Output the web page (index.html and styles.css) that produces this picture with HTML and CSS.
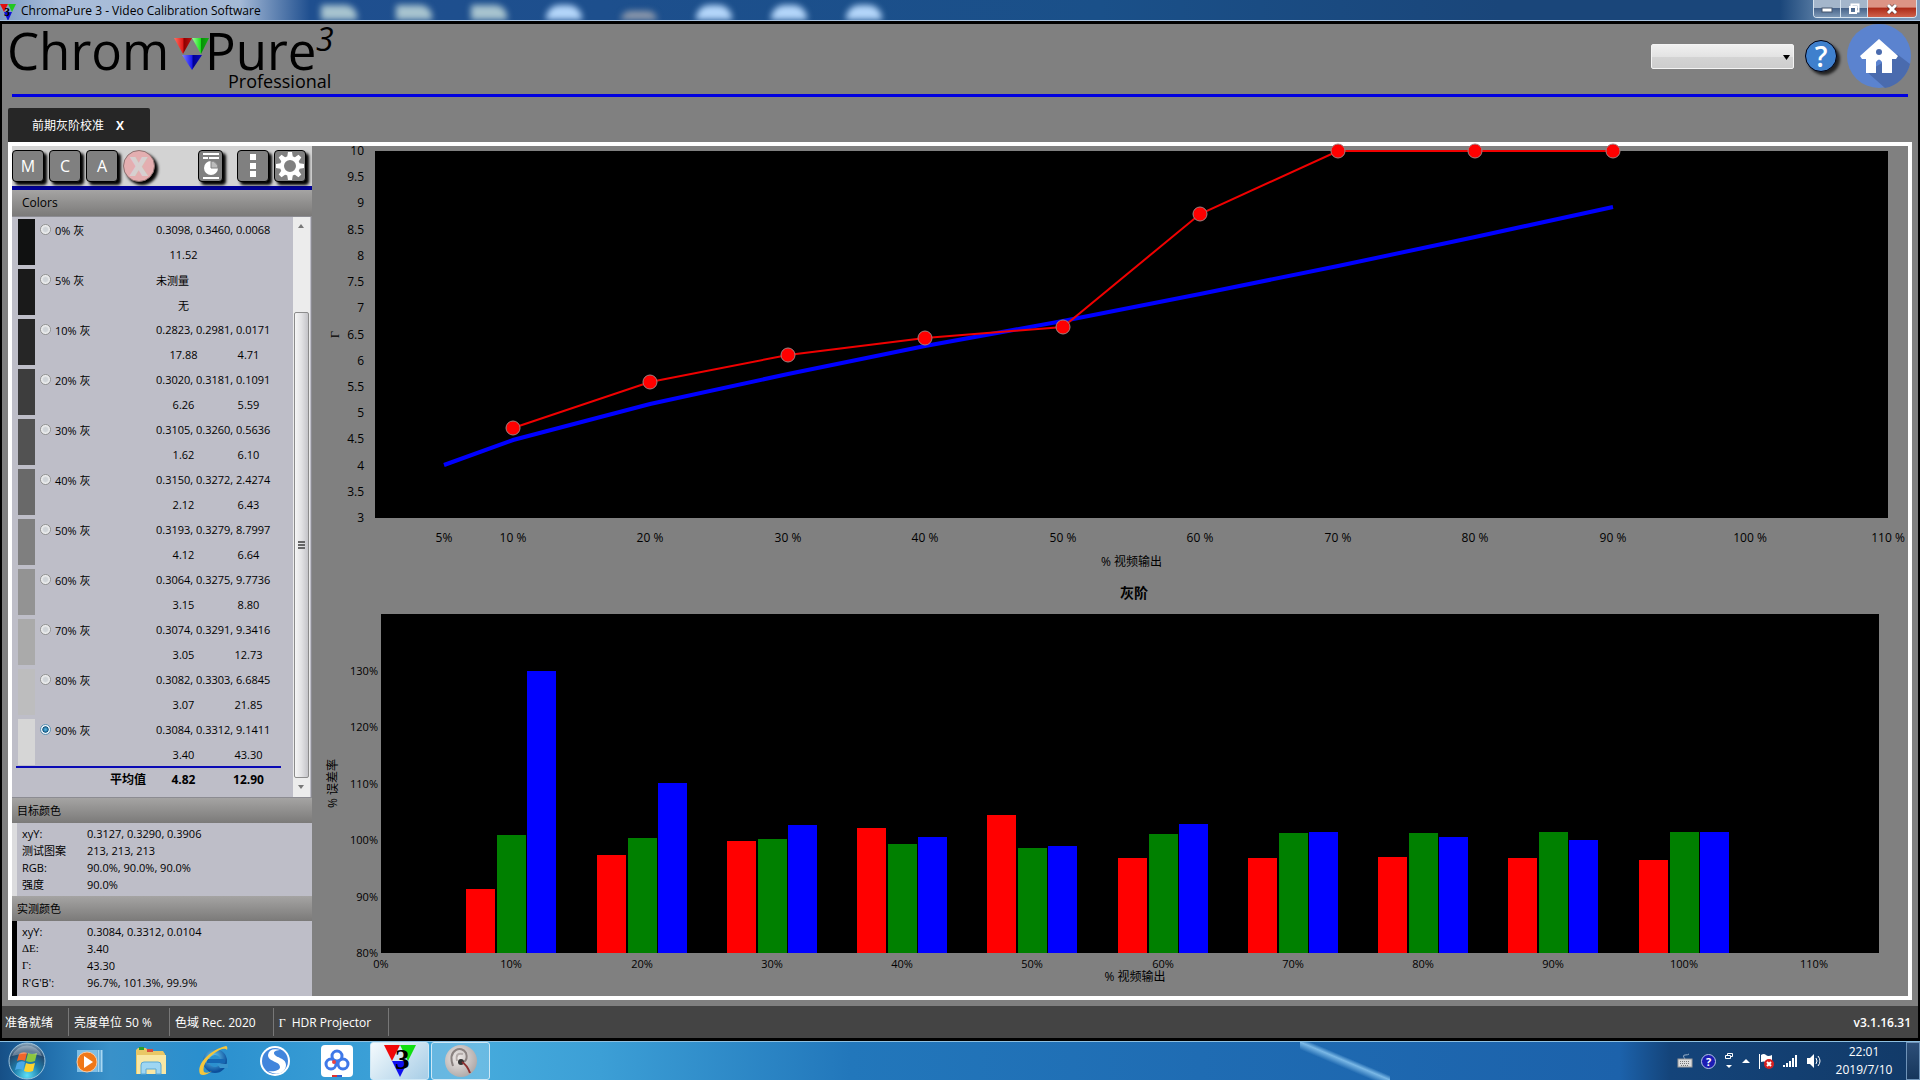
FILE: index.html
```html
<!DOCTYPE html>
<html lang="zh-CN">
<head>
    <meta charset="UTF-8">
    <meta name="viewport" content="width=device-width, initial-scale=1.0">
    <title>ChromaPure 3 - Video Calibration Software</title>
    <link rel="stylesheet" href="styles.css">
</head>
<body>
    <!-- Gradients and shapes used by several icons -->
    <svg class="defs" width="0" height="0" aria-hidden="true">
        <defs>
            <linearGradient id="g-red"><stop offset="0" stop-color="#ff7060"/><stop offset=".5" stop-color="#e01818"/><stop offset=".55" stop-color="#8c0000"/><stop offset="1" stop-color="#c01010"/></linearGradient>
            <linearGradient id="g-green"><stop offset="0" stop-color="#9dff9d"/><stop offset=".5" stop-color="#20e020"/><stop offset=".55" stop-color="#089008"/><stop offset="1" stop-color="#10b010"/></linearGradient>
            <linearGradient id="g-blue"><stop offset="0" stop-color="#8080ff"/><stop offset=".5" stop-color="#1818f0"/><stop offset=".55" stop-color="#000090"/><stop offset="1" stop-color="#0808c0"/></linearGradient>
            <radialGradient id="g-orb" cx=".5" cy=".9" r=".9"><stop offset="0" stop-color="#5fe0f5"/><stop offset=".4" stop-color="#1d7fae"/><stop offset=".75" stop-color="#23486c"/><stop offset="1" stop-color="#8fa9bd"/></radialGradient>
            <radialGradient id="g-ie" cx=".4" cy=".3" r=".8"><stop offset="0" stop-color="#6fd3f8"/><stop offset="1" stop-color="#0b4f9c"/></radialGradient>
            <radialGradient id="g-ear" cx=".4" cy=".4" r=".7"><stop offset="0" stop-color="#efeae8"/><stop offset="1" stop-color="#a9a3a2"/></radialGradient>
        </defs>
    </svg>

    <header class="titlebar">
        <svg class="title-icon" width="16" height="18" viewBox="0 0 16 18">
            <path d="M0 1h8l-4 8z" fill="#e01010"/><path d="M8 1h8l-4 8z" fill="#20c820"/><path d="M4 9h8l-4 9z" fill="#1010d8"/>
            <text x="4" y="13" class="mini-three">3</text>
        </svg>
        <span class="title-text">ChromaPure 3 - Video Calibration Software</span>
        <div class="desktop-blur"><i></i><i></i><i></i><i></i><i></i><i></i><i></i><i></i></div>
        <div class="window-buttons">
            <button class="win-min" aria-label="Minimize"><svg width="12" height="10"><rect x="1" y="4" width="10" height="4" fill="#fff" stroke="#46566e"/></svg></button>
            <button class="win-max" aria-label="Restore"><svg width="12" height="12"><path d="M3.500 3V1.500h7v7H9" fill="none" stroke="#fff" stroke-width="2"/><rect x="2" y="4" width="6" height="6" fill="none" stroke="#fff" stroke-width="2"/></svg></button>
            <button class="win-close" aria-label="Close"><svg width="12" height="10"><path d="M2 1l8 8M10 1l-8 8" stroke="#4a2a2a" stroke-width="4"/><path d="M2 1l8 8M10 1l-8 8" stroke="#fff" stroke-width="3"/></svg></button>
        </div>
    </header>

    <main class="app">
        <div class="brand-bar">
            <svg class="logo" width="332" height="68" viewBox="0 0 332 68">
                <text x="-5" y="46" class="logo-name">Chrom</text>
                <path d="M162 14h18l-9 16z" fill="url(#g-red)"/>
                <path d="M180 14h17l-8 16z" fill="url(#g-green)"/>
                <path d="M170 31h20l-10 15z" fill="url(#g-blue)"/>
                <text x="193" y="46" class="logo-name">Pure</text>
                <text x="304" y="27" class="logo-version">3</text>
                <text x="216" y="64" class="logo-edition">Professional</text>
            </svg>
            <div class="brand-tools">
                <div class="combo">
                    <select aria-label="Meter"><option></option></select>
                    <svg width="8" height="6"><path d="M0 0h7L3.500 5z"/></svg>
                </div>
                <button class="help" aria-label="Help">?</button>
                <button class="home" aria-label="Home">
                    <svg width="64" height="64" viewBox="0 0 64 64">
                        <circle cx="32" cy="32" r="32" fill="#5b83cf"/>
                        <path d="M50 30l13 10A32 32 0 0 1 38 64L20 48z" fill="#4a6bae"/>
                        <path d="M32 15L13 32l2 3h4v14h10V38q3-5 6 0v11h10V35h4l2-3z" fill="#fff"/>
                        <circle cx="32" cy="28" r="3" fill="#4a6bae"/>
                    </svg>
                </button>
            </div>
        </div>

        <nav class="tabs">
            <div class="tab">前期灰阶校准 <button class="tab-close" aria-label="Close tab">X</button></div>
        </nav>

        <div class="workspace">
            <aside class="sidebar">
                <div class="toolbar">
                    <button class="tool">M</button>
                    <button class="tool">C</button>
                    <button class="tool">A</button>
                    <button class="tool tool-stop">X</button>
                    <button class="tool tool-report" aria-label="Report">
                        <svg width="20" height="28" viewBox="0 0 20 28">
                            <path d="M2 2h16M2 6h5M8 6h10M2 26h16" stroke="#fff" stroke-width="2"/>
                            <circle cx="10" cy="16" r="7" fill="#fff"/><path d="M10 16V9a7 7 0 0 1 7 7z" fill="#bbb" stroke="#808080"/>
                        </svg>
                    </button>
                    <button class="tool" aria-label="Options"><svg width="6" height="24"><path d="M0 0h6v6H0zM0 9h6v6H0zM0 17h6v6H0z" fill="#fff"/></svg></button>
                    <button class="tool" aria-label="Settings">
                        <svg width="28" height="28" viewBox="-14 -14 28 28">
                            <g fill="#fff">
                                <path id="tooth" d="M-3-8l1-6h4l1 6z"/>
                                <use href="#tooth" transform="rotate(45)"/><use href="#tooth" transform="rotate(90)"/>
                                <use href="#tooth" transform="rotate(135)"/><use href="#tooth" transform="rotate(180)"/>
                                <use href="#tooth" transform="rotate(225)"/><use href="#tooth" transform="rotate(270)"/>
                                <use href="#tooth" transform="rotate(315)"/>
                            </g>
                            <circle r="8" fill="none" stroke="#fff" stroke-width="4"/>
                        </svg>
                    </button>
                </div>

                <h2 class="panel-title panel-title-colors">Colors</h2>
                <div class="color-list">
                    <table class="readings">
                        <colgroup><col class="col-swatch"><col class="col-name"><col class="col-num"><col class="col-num"></colgroup>
                        <tbody id="readings"></tbody>
                        <tfoot>
                            <tr><th colspan="2">平均值</th><td>4.82</td><td>12.90</td></tr>
                        </tfoot>
                    </table>
                    <div class="scrollbar">
                        <svg width="8" height="5"><path d="M0 4l3-4 3 4z" fill="#777"/></svg>
                        <div class="scroll-thumb"><i></i><i></i><i></i></div>
                        <svg width="8" height="5"><path d="M0 0h6L3 4z" fill="#777"/></svg>
                    </div>
                </div>

                <h2 class="panel-title">目标颜色</h2>
                <table class="details details-target">
                    <tr><th>xyY:</th><td>0.3127, 0.3290, 0.3906</td></tr>
                    <tr><th>测试图案</th><td>213, 213, 213</td></tr>
                    <tr><th>RGB:</th><td>90.0%, 90.0%, 90.0%</td></tr>
                    <tr><th>强度</th><td>90.0%</td></tr>
                </table>

                <h2 class="panel-title">实测颜色</h2>
                <table class="details details-measured">
                    <tr><th>xyY:</th><td>0.3084, 0.3312, 0.0104</td></tr>
                    <tr><th class="greek">ΔE:</th><td>3.40</td></tr>
                    <tr><th class="greek">Γ:</th><td>43.30</td></tr>
                    <tr><th>R'G'B':</th><td>96.7%, 101.3%, 99.9%</td></tr>
                </table>
            </aside>

            <section class="charts">
                <svg class="chart chart-gamma" id="gamma-chart"></svg>
                <h3 class="chart-title">灰阶</h3>
                <svg class="chart chart-rgb" id="rgb-chart"></svg>
            </section>
        </div>
    </main>

    <footer class="statusbar">
        <span>准备就绪</span>
        <span>亮度单位 50 %</span>
        <span>色域 Rec. 2020</span>
        <span><b class="greek">Γ</b> HDR Projector</span>
        <strong>v3.1.16.31</strong>
    </footer>

    <div class="taskbar">
        <button class="task task-start" aria-label="Start">
            <svg width="38" height="38" viewBox="0 0 38 38">
                <circle cx="19" cy="19" r="18" fill="url(#g-orb)" stroke="#9fc4dc"/>
                <path d="M11 12q4-3 8-1l-2 8q-4-2-8 0z" fill="#f0662a"/>
                <path d="M20 11q4 2 9 0l-2 8q-5 2-9 0z" fill="#8cc63f"/>
                <path d="M9 21q4-3 8-1l-2 8q-4-2-8 0z" fill="#4aa8e8"/>
                <path d="M18 21q4 2 9 0l-2 8q-5 2-9 0z" fill="#fdd32f"/>
                <path d="M4 14a16 16 0 0 1 30 0q-15-5-30 0z" fill="#fff" opacity=".3"/>
            </svg>
        </button>
        <button class="task" aria-label="Media Player">
            <svg width="32" height="32" viewBox="0 0 32 32">
                <path d="M4 5h20v22H4z" fill="#7fbfe6"/><path d="M25.500 5v22M28.500 5v22" stroke="#a9d8f2" stroke-width="2"/>
                <circle cx="14" cy="17" r="10" fill="#f07818" stroke="#f9c9a0"/><path d="M11 11l9 6-9 6z" fill="#fff"/>
            </svg>
        </button>
        <button class="task" aria-label="Explorer">
            <svg width="34" height="32" viewBox="0 0 34 32">
                <path d="M2 5l2-2h8l2 3h15l2 3v20H2z" fill="#e9c765"/><path d="M5 2h5v3H5z" fill="#2ba02b"/><path d="M13 4h6v3h-6z" fill="#d84a3a"/>
                <path d="M3 10h29v19H3z" fill="#f8e7a4"/>
                <path d="M7 29v-9q0-3 3-3h14q3 0 3 3v9h-5v-5H12v5z" fill="#9ed6f3" stroke="#5ba9d6"/>
            </svg>
        </button>
        <button class="task" aria-label="Internet Explorer">
            <svg width="32" height="32" viewBox="0 0 32 32">
                <circle cx="18" cy="16" r="9" fill="none" stroke="url(#g-ie)" stroke-width="6"/>
                <path d="M10 14h18v4H10z" fill="#1668b4"/>
                <path d="M20 19h11v4h-8z" fill="#3994cd"/>
                <path d="M3 29C-1 20 12 5 29 1q2 0 1 4-1-2-5-1C15 8 4 19 7 27q3 2 8-1-8 6-12 3z" fill="#f5c63c"/>
            </svg>
        </button>
        <button class="task" aria-label="Sogou">
            <svg width="32" height="32" viewBox="0 0 32 32">
                <circle cx="16" cy="16" r="15" fill="#fff"/><circle cx="16" cy="16" r="13" fill="#4285dc"/>
                <path d="M22 5Q10 2 9 10c0 7 12 6 12 12 0 3-5 5-12 4 10 6 18 1 18-6 0-8-12-7-12-12 0-2 3-3 7-3z" fill="#fff"/>
            </svg>
        </button>
        <button class="task" aria-label="Netdisk">
            <svg width="32" height="32" viewBox="0 0 32 32">
                <rect width="32" height="32" rx="4" fill="#fff"/>
                <g fill="none" stroke="#3f78e8" stroke-width="3"><circle cx="16" cy="11" r="5"/><circle cx="10" cy="19" r="5"/><circle cx="22" cy="19" r="5"/></g>
                <circle cx="13" cy="17" r="2" fill="#e84040"/>
                <path d="M11 31h5" stroke="#e03030" stroke-width="2"/><path d="M16 31h5" stroke="#3060d0" stroke-width="2"/>
            </svg>
        </button>
        <button class="task task-window task-active" aria-label="ChromaPure">
            <svg width="34" height="34" viewBox="0 0 34 34">
                <path d="M1 1h16l-8 16z" fill="#f00808"/><path d="M17 1h16l-8 16z" fill="#10e010"/><path d="M9 17h16l-8 16z" fill="#1010f0"/>
                <text x="12" y="25" class="task-three">3</text>
            </svg>
        </button>
        <button class="task task-window" aria-label="HCFR">
            <svg width="34" height="34" viewBox="0 0 34 34">
                <circle cx="17" cy="17" r="16" fill="url(#g-ear)"/>
                <path d="M9 22C3 5 18 1 22 9q2 6-2 9" fill="none" stroke="#8a8280" stroke-width="2"/>
                <path d="M13 17q-2-9 6-7" fill="none" stroke="#b4acaa" stroke-width="2"/>
                <circle cx="17" cy="18" r="3" fill="#333"/><path d="M18 18q5 3 8 11" fill="none" stroke="#8c3030" stroke-width="2"/>
            </svg>
        </button>
        <div class="tray">
            <svg width="16" height="16" viewBox="0 0 16 16"><path d="M8 6q-3-4 0-4t4-1" fill="none" stroke="#9ab0c8"/><rect x="1" y="6" width="14" height="8" fill="#ddd" stroke="#999"/><path d="M3 8.500h10M3 10.500h10M4 12.500h8" stroke="#777" stroke-dasharray="1 1"/></svg>
            <span class="tray-help">?</span>
            <svg width="10" height="18" viewBox="0 0 10 18"><path d="M3.500 3V1.500h5v3H7M1.500 3.500h5v3h-5z" fill="none" stroke="#fff"/><path d="M2 13h6l-3 3z" fill="#fff"/></svg>
            <svg width="8" height="6"><path d="M0 5h8L4 1z" fill="#fff"/></svg>
            <svg width="16" height="16" viewBox="0 0 16 16"><path d="M1.500 1v15" stroke="#fff"/><path d="M3 2q3-2 5 0t6 0v7q-4 1-6 0t-5 0z" fill="#fff"/><circle cx="11" cy="11" r="5" fill="#d82020"/><path d="M9 9l4 4M13 9l-4 4" stroke="#fff" stroke-width="2"/></svg>
            <svg width="16" height="14" viewBox="0 0 16 14"><path d="M1 11h2v2H1zM4 9h2v4H4zM7 7h2v6H7zM10 4h2v9h-2zM13 1h2v12h-2z" fill="#fff"/></svg>
            <svg width="16" height="16" viewBox="0 0 16 16"><path d="M1 5h3l4-4v14l-4-4H1z" fill="#fff"/><path d="M10 5q2 3 0 6M12 3q4 5 0 10" fill="none" stroke="#fff"/></svg>
        </div>
        <div class="clock"><time>22:01</time><time>2019/7/10</time></div>
        <button class="show-desktop" aria-label="Show desktop"></button>
    </div>

    <script>
        const readings = [
            { name: '0% 灰', xyY: '0.3098, 0.3460, 0.0068', dE: '11.52', gamma: '', color: '#101111' },
            { name: '5% 灰', xyY: '未测量', dE: '无', gamma: '', color: '#1a1a1a' },
            { name: '10% 灰', xyY: '0.2823, 0.2981, 0.0171', dE: '17.88', gamma: '4.71', color: '#262626' },
            { name: '20% 灰', xyY: '0.3020, 0.3181, 0.1091', dE: '6.26', gamma: '5.59', color: '#3d3d3d' },
            { name: '30% 灰', xyY: '0.3105, 0.3260, 0.5636', dE: '1.62', gamma: '6.10', color: '#525252' },
            { name: '40% 灰', xyY: '0.3150, 0.3272, 2.4274', dE: '2.12', gamma: '6.43', color: '#696969' },
            { name: '50% 灰', xyY: '0.3193, 0.3279, 8.7997', dE: '4.12', gamma: '6.64', color: '#7f7f7f' },
            { name: '60% 灰', xyY: '0.3064, 0.3275, 9.7736', dE: '3.15', gamma: '8.80', color: '#939393' },
            { name: '70% 灰', xyY: '0.3074, 0.3291, 9.3416', dE: '3.05', gamma: '12.73', color: '#aaaaaa' },
            { name: '80% 灰', xyY: '0.3082, 0.3303, 6.6845', dE: '3.07', gamma: '21.85', color: '#bdbdbe' },
            { name: '90% 灰', xyY: '0.3084, 0.3312, 9.1411', dE: '3.40', gamma: '43.30', color: '#d6d6d6' }
        ];

        document.getElementById('readings').innerHTML = readings.map((r, i) => `
            <tr>
                <td rowspan="2"><div class="swatch" style="background: ${r.color}"></div></td>
                <td class="name"><label><input type="radio" name="reading" ${i === 10 ? 'checked' : ''}>${r.name}</label></td>
                <td class="xyy" colspan="2">${r.xyY}</td>
            </tr>
            <tr><td></td><td>${r.dE}</td><td>${r.gamma}</td></tr>
        `).join('');

        // [stimulus %, gamma]
        const targetGamma = [[5, 4.02], [10, 4.49], [20, 5.17], [30, 5.74], [40, 6.28], [50, 6.76], [60, 7.28], [70, 7.8], [80, 8.36], [90, 8.93]];
        const measuredGamma = [[10, 4.71], [20, 5.59], [30, 6.1], [40, 6.43], [50, 6.64], [60, 8.8], [70, 10], [80, 10], [90, 10]];

        // R, G, B for 10% to 100%
        const rgb = [
            [91.4, 100.9, 130], [97.3, 100.4, 110.1], [99.9, 100.1, 102.6], [102.1, 99.3, 100.5], [104.4, 98.5, 98.9],
            [96.8, 101.1, 102.8], [96.8, 101.2, 101.4], [97, 101.2, 100.5], [96.8, 101.4, 100], [96.4, 101.4, 101.4]
        ];

        function label(x, y, text, cls) {
            return `<text x="${x}" y="${y}" class="${cls}">${text}</text>`;
        }

        function drawGamma() {
            const svg = document.getElementById('gamma-chart');
            const left = 63, top = 5;
            const w = svg.clientWidth - left - 20;
            const h = svg.clientHeight - top - 60;
            const px = v => Math.round(left + v / 110 * w);
            const py = v => Math.round(top + (10 - v) / 7 * h);
            const line = points => points.map(p => px(p[0]) + ',' + py(p[1])).join(' ');

            let out = `<rect x="${left}" y="${top}" width="${w}" height="${h}"/>`;
            for (let v = 3; v <= 10; v += 0.5) {
                out += label(left - 11, py(v) + 4, v, 'tick tick-end');
            }
            out += label(px(5), top + h + 24, '5%', 'tick');
            for (let v = 10; v <= 110; v += 10) {
                out += label(px(v), top + h + 24, v + ' %', 'tick');
            }
            out += label(left + w / 2, top + h + 48, '% 视频输出', 'axis-title');
            out += `<text transform="translate(27 ${top + h / 2}) rotate(-90)" class="axis-title greek">Γ</text>`;
            out += `<polyline points="${line(targetGamma)}" class="target-line"/>`;
            out += `<polyline points="${line(measuredGamma)}" class="measured-line"/>`;
            measuredGamma.forEach(p => {
                out += `<circle cx="${px(p[0])}" cy="${py(p[1])}" r="7" class="marker"/>`;
            });
            svg.innerHTML = out;
        }

        function drawRgb() {
            const svg = document.getElementById('rgb-chart');
            const left = 69, top = 6;
            const w = svg.clientWidth - left - 29;
            const h = svg.clientHeight - top - 43;
            const px = v => Math.round(left + v / 115 * w);
            const py = v => Math.round(top + (140 - v) / 60 * h);
            const bar = Math.round(w / 52);

            let out = `<rect x="${left}" y="${top}" width="${w}" height="${h}"/>`;
            for (let v = 80; v <= 130; v += 10) {
                out += label(left - 3, py(v) + 4, v + '%', 'tick tick-small tick-end');
            }
            for (let v = 0; v <= 110; v += 10) {
                out += label(px(v), top + h + 15, v + '%', 'tick tick-small');
            }
            out += label(left + w / 2 + 5, top + h + 28, '% 视频输出', 'axis-title');
            out += `<text transform="translate(25 ${top + h / 2}) rotate(-90)" class="axis-title">% 误差率</text>`;
            rgb.forEach((group, i) => {
                const start = px((i + 1) * 10) - bar - 16;
                group.forEach((v, n) => {
                    out += `<rect x="${start + n * (bar + 1) + (n ? 1 : 0)}" y="${py(v)}" width="${bar}" height="${top + h - py(v)}" class="bar-${'rgb'[n]}"/>`;
                });
            });
            svg.innerHTML = out;
        }

        function drawCharts() {
            drawGamma();
            drawRgb();
        }

        drawCharts();
        window.addEventListener('resize', drawCharts);
    </script>
</body>
</html>
```
FILE: styles.css
```css
* {
    box-sizing: border-box;
}

body {
    margin: 0;
    height: 100vh;
    min-height: 900px;
    display: flex;
    flex-direction: column;
    overflow: hidden;
    background: #000;
    color: #000;
    font-family: "Open Sans", "Noto Sans CJK SC", sans-serif;
    font-size: 12px;
}

button {
    margin: 0;
    padding: 0;
    border: none;
    background: none;
    color: inherit;
    font: inherit;
    cursor: pointer;
}

svg {
    display: block;
    flex-shrink: 0;
}

.defs {
    position: absolute;
}

.greek {
    font-family: "Liberation Serif", serif;
}

/* Title bar */
.titlebar {
    display: flex;
    height: 21px;
    flex-shrink: 0;
    overflow: hidden;
    border-bottom: 1px solid #a9c3e0;
    background: linear-gradient(90deg, #7f9dc4 0, #a9bdd9 60px, #a4b9d6 240px, #1f4f8f 310px, #1d4f8d 600px, #1a5089 1100px, #1a467a 1500px, #1a467a 1780px, #5c7fa6 1820px, #7d9abb 1920px);
}

.title-icon {
    margin-top: 3px;
}

.mini-three {
    font: bold 12px "Liberation Serif", serif;
}

.title-text {
    margin-left: 5px;
    line-height: 21px;
    white-space: nowrap;
}

.desktop-blur {
    display: flex;
    align-items: flex-end;
    gap: 39px;
    flex: 1;
    padding-left: 60px;
    filter: blur(3px);
}

.desktop-blur i {
    width: 36px;
    height: 15px;
    border-radius: 14px 14px 0 0;
    background: #b4d6fa;
}

.desktop-blur i:nth-child(-n+3) {
    background: #a8c4cf;
    border-radius: 2px 12px 0 0;
}

.desktop-blur i:nth-child(5) {
    height: 9px;
    background: #8f9aac;
}

.window-buttons {
    display: flex;
    height: 18px;
    margin-right: 3px;
    border: 1px solid #d5e2ee;
    border-top: none;
    border-radius: 0 0 4px 4px;
    overflow: hidden;
}

.window-buttons button {
    display: flex;
    align-items: center;
    justify-content: center;
    width: 27px;
    background: linear-gradient(#a4b6cb 45%, #48648a 50%, #7d98b6);
    border-right: 1px solid #d5e2ee;
}

.window-buttons .win-close {
    width: 48px;
    border-right: none;
    background: linear-gradient(#dc9485 40%, #ad2d1a 50%, #d0614a);
}

/* Application frame */
.app {
    display: flex;
    flex-direction: column;
    flex: 1;
    min-height: 0;
    margin: 3px 2px 0;
    padding: 0 6px 6px;
    background: #808080;
}

.brand-bar {
    display: flex;
    justify-content: space-between;
    align-items: flex-start;
    height: 73px;
    margin: 0 4px;
    flex-shrink: 0;
    border-bottom: 3px solid #0000e0;
}

.logo {
    overflow: visible;
}

.logo-name {
    font-size: 51px;
}

.logo-version {
    font-size: 32px;
    font-style: italic;
}

.logo-edition {
    font-size: 18px;
}

.brand-tools {
    display: flex;
    align-items: center;
    height: 64px;
    margin-right: -3px;
}

.combo {
    position: relative;
    width: 143px;
    height: 25px;
    margin-right: 11px;
}

.combo select {
    width: 100%;
    height: 100%;
    appearance: none;
    border: 1px solid #f4f4f4;
    border-radius: 2px;
    background: linear-gradient(#f0f0f0, #e3e3e3 50%, #d4d4d4 51%, #cdcdcd);
}

.combo svg {
    position: absolute;
    right: 3px;
    top: 11px;
    pointer-events: none;
}

.help {
    width: 32px;
    height: 32px;
    margin-right: 10px;
    border: 1px solid #001;
    border-radius: 50%;
    background: #3f80cd;
    box-shadow: 3px 3px 3px #222;
    color: #fff;
    font-size: 28px;
    font-weight: 600;
    line-height: 30px;
}

.home {
    border-radius: 50%;
}

.tabs {
    display: flex;
    margin-top: 11px;
    flex-shrink: 0;
}

.tab {
    display: flex;
    align-items: center;
    gap: 12px;
    height: 34px;
    padding: 0 26px 0 24px;
    border-radius: 2px 2px 0 0;
    background: #262626;
    color: #fff;
}

.tab-close {
    font-weight: bold;
}

.workspace {
    display: flex;
    flex: 1;
    min-height: 0;
    border: 4px solid #fff;
}

/* Sidebar */
.sidebar {
    display: flex;
    flex-direction: column;
    width: 300px;
    flex-shrink: 0;
    background: #bebec8;
}

.toolbar {
    display: flex;
    align-items: flex-start;
    gap: 5px;
    height: 44px;
    padding-top: 4px;
    flex-shrink: 0;
    border-bottom: 4px solid #000096;
    background: #d3d3d3;
}

.tool {
    display: flex;
    align-items: center;
    justify-content: center;
    width: 32px;
    height: 32px;
    border: 1px solid #000;
    border-radius: 4px;
    background: #808080;
    box-shadow: 3px 3px 3px #000;
    color: #fff;
    font-size: 16px;
}

.tool-stop {
    border-color: #8c7070;
    border-radius: 50%;
    background: #e4aeb0;
    color: #d6d0d0;
    font-size: 26px;
    font-weight: 800;
}

.tool-report {
    width: 25px;
    margin: 0 9px 0 38px;
}

.panel-title {
    margin: 0;
    padding-left: 5px;
    height: 25px;
    flex-shrink: 0;
    background: linear-gradient(#a5a4a3, #7b7a79);
    font-size: 11px;
    font-weight: normal;
    line-height: 26px;
}

.panel-title-colors {
    height: 26px;
    padding-left: 10px;
    font-size: 12px;
}

.color-list {
    display: flex;
    justify-content: space-between;
    flex: 1;
    min-height: 0;
    padding: 0 1px 0 4px;
    border: solid #8c8c92;
    border-width: 1px 1px 1px 0;
}

.readings {
    width: 265px;
    height: 0;
    border-collapse: collapse;
    table-layout: fixed;
    font-size: 11px;
    text-align: center;
}

.col-swatch {
    width: 24px;
}

.col-num {
    width: 65px;
}

.readings td,
.readings th {
    height: 25px;
    padding: 0;
}

.readings .name,
.readings .xyy {
    text-align: left;
}

.readings .xyy {
    padding-left: 5px;
}

.swatch {
    width: 17px;
    height: 46px;
    margin-left: 2px;
}

.readings label {
    display: flex;
    align-items: center;
    gap: 4px;
}

.readings input {
    width: 11px;
    height: 11px;
    margin: 0;
    appearance: none;
    border: 1px solid #8e8f8f;
    border-radius: 50%;
    background: radial-gradient(#d0d4d8 30%, #f6f6f6 70%);
}

.readings input:checked {
    border-color: #5a8fb0;
    background: radial-gradient(#4fb0de 10%, #15557e 45%, #eef6fa 55%);
}

.readings tfoot tr {
    border-top: 2px solid #0a0ab4;
}

.readings tfoot {
    font-size: 12px;
    font-weight: bold;
}

.readings tfoot th {
    padding-right: 5px;
    text-align: right;
}

.readings tfoot td,
.readings tfoot th {
    height: 23px;
}

.scrollbar {
    display: flex;
    flex-direction: column;
    align-items: center;
    gap: 7px;
    width: 17px;
    padding: 7px 0;
    background: #ececec;
}

.scroll-thumb {
    display: flex;
    flex-direction: column;
    align-items: center;
    justify-content: center;
    gap: 1px;
    flex: 1;
    width: 15px;
    margin-top: 76px;
    border: 1px solid #8c8c8c;
    border-radius: 2px;
    background: linear-gradient(90deg, #f6f6f6, #e2e2e4 50%, #c4c4c8);
}

.scroll-thumb i {
    width: 7px;
    height: 2px;
    background: #666;
}

.details {
    width: 100%;
    padding: 2px 0 3px 10px;
    border-collapse: separate;
    border-spacing: 0;
    font-size: 11px;
    line-height: 17px;
}

.details th {
    width: 65px;
    padding: 0;
    font-weight: normal;
    text-align: left;
}

.details td {
    padding: 0;
}

.details-target {
    box-shadow: inset 5px 0 #dcdcde;
}

.details-measured {
    padding-bottom: 5px;
    box-shadow: inset 5px 0 #000;
}

/* Charts */
.charts {
    display: flex;
    flex-direction: column;
    flex: 1;
    min-width: 0;
}

.chart {
    width: 100%;
    min-height: 0;
    overflow: visible;
}

.chart-gamma {
    flex: 432 1 0;
}

.chart-rgb {
    flex: 388 1 0;
}

.chart-title {
    margin: 0;
    padding-right: 78px;
    padding-left: 126px;
    font-size: 14px;
    line-height: 30px;
    text-align: center;
}

.tick {
    font-size: 12px;
    text-anchor: middle;
}

.tick-small {
    font-size: 11px;
}

.tick-end {
    text-anchor: end;
}

.axis-title {
    font-size: 12px;
    text-anchor: middle;
}

.target-line {
    fill: none;
    stroke: #0000ff;
    stroke-width: 4;
}

.measured-line {
    fill: none;
    stroke: #f00000;
    stroke-width: 2;
}

.marker {
    fill: #ff0000;
    stroke: #a08080;
}

.bar-r {
    fill: #ff0000;
}

.bar-g {
    fill: #008000;
}

.bar-b {
    fill: #0000ff;
}

/* Status bar */
.statusbar {
    display: flex;
    align-items: center;
    height: 32px;
    margin: 0 2px 3px;
    flex-shrink: 0;
    background: #444;
    color: #fff;
}

.statusbar span {
    height: 28px;
    padding: 0 17px 0 5px;
    border-right: 1px solid #777;
    line-height: 29px;
    white-space: nowrap;
}

.statusbar span:first-child {
    padding-left: 3px;
    padding-right: 15px;
}

.statusbar .greek {
    margin-right: 3px;
    font-weight: normal;
}

.statusbar strong {
    margin-left: auto;
    padding-right: 7px;
    font-weight: 600;
}

/* Windows taskbar */
.taskbar {
    display: flex;
    align-items: center;
    height: 39px;
    flex-shrink: 0;
    border-top: 1px solid #8fc0e0;
    background:
        linear-gradient(to top right, transparent 40%, #7ab8e6 50%, transparent 56%) 1300px 0 / 90px 100% no-repeat,
        linear-gradient(90deg, #164f86 0, #2270ad 50px, #3991c9 110px, #2a8fce 200px, #45aadc 480px, #3c9fd6 600px, #2277bb 850px, #1f6cb3 1200px, #1c62ab 1620px, #14447a 1670px, #123a68 1920px);
    color: #fff;
}

.task {
    display: flex;
    align-items: center;
    justify-content: center;
    width: 62px;
    height: 38px;
}

.task-start {
    width: 58px;
    padding-right: 4px;
}

.task-window {
    width: 59px;
    margin-left: 2px;
    border: 1px solid #cfe8f6;
    border-radius: 3px;
    background: rgba(255, 255, 255, 0.2);
}

.task-active {
    background: linear-gradient(135deg, #f4fafd, #a7cde6);
}

.task-three {
    font: bold 29px "Liberation Serif", serif;
}

.tray {
    display: flex;
    align-items: center;
    gap: 8px;
    margin-left: auto;
}

.tray-help {
    width: 15px;
    height: 15px;
    border: 1px solid #b8c4e8;
    border-radius: 50%;
    background: #1c1cb4;
    font-size: 11px;
    font-weight: bold;
    line-height: 13px;
    text-align: center;
}

.clock {
    display: flex;
    flex-direction: column;
    width: 84px;
    line-height: 18px;
    text-align: center;
}

.show-desktop {
    width: 14px;
    height: 38px;
    border: 1px solid #6f93b8;
    background: linear-gradient(#2d4f78, #16365c);
}
```
